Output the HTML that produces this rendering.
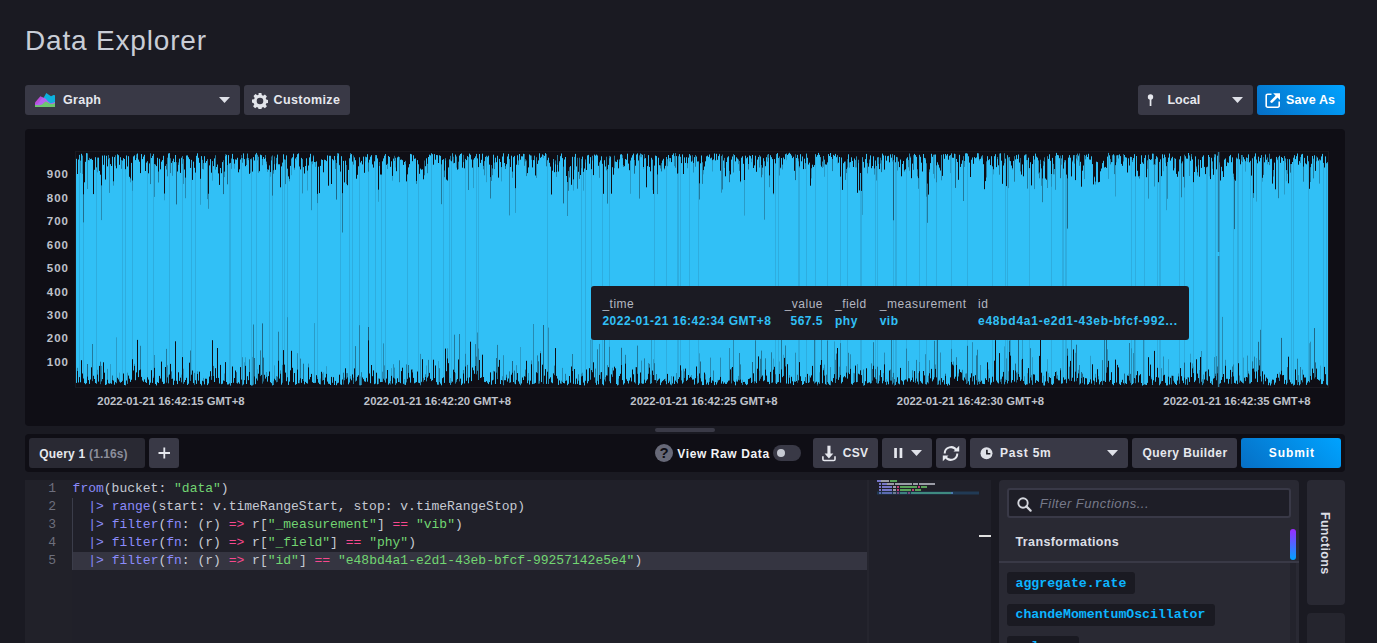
<!DOCTYPE html>
<html><head><meta charset="utf-8">
<style>
*{box-sizing:border-box;margin:0;padding:0}
html,body{width:1377px;height:643px;overflow:hidden;background:#1a1a22;font-family:"Liberation Sans",sans-serif;color:#c6cad3;position:relative}
.abs{position:absolute}
.t{position:absolute;line-height:1;white-space:nowrap}
.bx{position:absolute;background:#393946;border-radius:3px}
.ln{position:absolute;left:25px;width:31px;text-align:right;font-family:"Liberation Mono",monospace;font-size:13px;color:#6d6f7d;line-height:18px}
.code{position:absolute;left:72.6px;font-family:"Liberation Mono",monospace;font-size:13px;color:#c6cad3;line-height:18px;white-space:pre}
.kw{color:#8b8bfa}.str{color:#72d572}.op{color:#f7488d}.pipe{color:#8b8bfa}
.fn{position:absolute;left:1007px;height:22px;background:#1a1a22;border-radius:3px}
.fnt{position:absolute;left:1015.5px;font-family:"Liberation Mono",monospace;font-weight:bold;font-size:13.2px;color:#0cb4ff;line-height:1;white-space:nowrap}
</style></head><body>

<!-- header buttons -->
<div class="bx" style="left:25px;top:85px;width:215px;height:30px"></div>
<svg class="abs" style="left:35px;top:93px" width="20" height="14" viewBox="0 0 20 14">
  <path d="M8.5 14V5L11.3 0L13 1.3L16 3.2L18.5 2L20 2.3V14Z" fill="#0db1de"/>
  <path d="M0 14V9.5L5.4 3.3L9 5V14Z" fill="#b94fda"/>
  <path d="M0 14V11.8L3 10.5L7.5 4.6L10.5 5.6L13.2 8.5L15.5 10.3L17.8 9.7L20 9V14Z" fill="#b264ef"/>
  <path d="M0 14V12L4.5 12.3L7 11.5L10.5 8.5L12.5 9.3L15 10.8L17.5 10.9L20 10V14Z" fill="#6cc76d"/>
</svg>
<svg class="abs" style="left:219px;top:97px" width="11" height="6" viewBox="0 0 11 6"><path d="M0 0H11L5.5 6Z" fill="#dfe1e8"/></svg>

<div class="bx" style="left:244px;top:85px;width:106px;height:30px"></div>
<svg class="abs" style="left:252px;top:92.8px" width="16" height="16" viewBox="0 0 16 16">
  <path fill="#e2e4ea" fill-rule="evenodd" d="M6.6 0h2.8l.4 2.1 1.3.6 1.8-1.2 2 2-1.2 1.8.6 1.3 2.1.4v2.8l-2.1.4-.6 1.3 1.2 1.8-2 2-1.8-1.2-1.3.6-.4 2.1H6.6l-.4-2.1-1.3-.6-1.8 1.2-2-2 1.2-1.8-.6-1.3L0 9.4V6.6l2.1-.4.6-1.3-1.2-1.8 2-2 1.8 1.2 1.3-.6z M8 4.7a3.3 3.3 0 1 0 0 6.6a3.3 3.3 0 1 0 0-6.6z"/>
</svg>

<div class="bx" style="left:1138px;top:85px;width:115px;height:30px"></div>
<svg class="abs" style="left:1147px;top:94px" width="7" height="13" viewBox="0 0 7 13"><circle cx="3.5" cy="3" r="2.7" fill="#e6e8ee"/><rect x="2.7" y="4" width="1.7" height="8" fill="#e6e8ee"/></svg>
<svg class="abs" style="left:1232px;top:97px" width="11" height="6" viewBox="0 0 11 6"><path d="M0 0H11L5.5 6Z" fill="#dfe1e8"/></svg>

<div class="bx" style="left:1257px;top:85px;width:88px;height:30px;background:linear-gradient(45deg,#066fc5,#00a3ff)"></div>
<svg class="abs" style="left:1265px;top:93px" width="16" height="16" viewBox="0 0 16 16"><path d="M6.5 1.2H2.7A1.5 1.5 0 0 0 1.2 2.7v10A1.5 1.5 0 0 0 2.7 14.2h10A1.5 1.5 0 0 0 14.2 12.7V8.5" stroke="#fff" stroke-width="1.6" fill="none"/><path d="M8.2 0.3H15V7.1Z" fill="#fff"/><path d="M6.6 8.6L12.2 3" stroke="#fff" stroke-width="2.6" stroke-linecap="round"/></svg>
<div class="t" style="left:25.00px;top:26.90px;font-size:28px;color:#c9cdd6;letter-spacing:0.819px;">Data Explorer</div>
<div class="t" style="left:63.10px;top:94.22px;font-size:12.5px;color:#e6e8ee;letter-spacing:0.248px;font-weight:bold;">Graph</div>
<div class="t" style="left:273.60px;top:94.22px;font-size:12.5px;color:#e6e8ee;letter-spacing:0.388px;font-weight:bold;">Customize</div>
<div class="t" style="left:1167.40px;top:94.22px;font-size:12.5px;color:#e6e8ee;letter-spacing:0.039px;font-weight:bold;">Local</div>
<div class="t" style="left:1286.00px;top:94.22px;font-size:12.5px;color:#fff;letter-spacing:0.137px;font-weight:bold;">Save As</div>

<!-- graph panel -->
<div class="abs" style="left:25px;top:129px;width:1320px;height:297px;background:#0f0e15;border-radius:4px"></div>
<svg width="1377" height="643" style="position:absolute;left:0;top:0">
<rect x="75.5" y="151.5" width="1253" height="236" fill="none" stroke="#1a1920" stroke-width="1"/>
<path d="M76.5 158.8V382.9M77.5 174.0V370.9M78.5 159.5V382.5M79.5 154.9V377.1M80.5 160.7V382.3M81.5 153.8V360.2M82.5 155.6V373.5M83.5 194.5V378.5M84.5 182.3V383.1M85.5 161.8V384.2M86.5 153.1V383.2M87.5 153.4V376.4M88.5 160.1V380.1M89.5 157.9V383.9M90.5 159.0V379.5M91.5 158.7V367.3M92.5 160.0V381.1M93.5 194.1V375.8M94.5 169.8V379.0M95.5 157.2V383.0M96.5 167.4V383.7M97.5 157.7V374.5M98.5 157.6V381.6M99.5 170.9V365.9M100.5 174.7V384.1M101.5 185.5V381.3M102.5 155.6V379.1M103.5 164.8V362.3M104.5 155.4V372.7M105.5 179.5V385.0M106.5 155.8V384.4M107.5 166.4V379.7M108.5 155.1V383.3M109.5 158.0V383.7M110.5 164.1V383.2M111.5 166.0V383.8M112.5 156.7V379.8M113.5 181.4V380.6M114.5 157.1V384.7M115.5 155.4V382.2M116.5 168.3V383.2M117.5 154.3V377.8M118.5 155.2V379.4M119.5 164.8V381.6M120.5 157.2V382.7M121.5 160.2V382.0M122.5 160.6V380.8M123.5 158.1V373.5M124.5 159.0V385.0M125.5 169.2V385.3M126.5 155.5V380.5M127.5 166.5V383.8M128.5 156.2V375.6M129.5 176.8V378.7M130.5 178.5V381.9M131.5 162.9V379.8M132.5 180.6V359.2M133.5 156.4V370.5M134.5 155.4V365.8M135.5 160.1V380.2M136.5 154.5V372.4M137.5 153.5V339.9M138.5 159.6V377.1M139.5 161.7V370.2M140.5 173.1V369.4M141.5 154.1V376.9M142.5 159.1V380.5M143.5 156.6V381.8M144.5 154.8V379.4M145.5 171.0V382.1M146.5 162.6V383.0M147.5 161.2V377.3M148.5 173.3V379.6M149.5 163.4V384.9M150.5 153.5V382.7M151.5 158.0V370.2M152.5 155.9V382.9M153.5 153.9V377.8M154.5 164.0V367.8M155.5 164.6V384.0M156.5 166.1V385.4M157.5 157.8V382.2M158.5 171.7V383.0M159.5 158.8V375.9M160.5 169.3V378.5M161.5 161.7V361.6M162.5 160.1V381.8M163.5 155.8V384.0M164.5 193.6V383.6M165.5 165.9V367.0M166.5 164.1V382.5M167.5 157.8V377.3M168.5 153.5V383.3M169.5 153.1V374.5M170.5 158.4V363.9M171.5 162.9V378.9M172.5 161.1V378.7M173.5 158.7V384.9M174.5 162.1V380.7M175.5 155.0V341.3M176.5 162.3V380.8M177.5 171.5V384.1M178.5 162.6V372.3M179.5 158.7V380.9M180.5 172.9V377.7M181.5 157.7V382.3M182.5 156.1V357.1M183.5 159.1V383.8M184.5 169.5V382.1M185.5 177.7V380.0M186.5 155.5V377.8M187.5 155.4V385.0M188.5 157.3V383.7M189.5 159.1V362.7M190.5 167.9V380.9M191.5 159.9V374.7M192.5 179.9V370.5M193.5 161.6V383.1M194.5 167.8V384.7M195.5 172.6V380.2M196.5 155.8V383.9M197.5 153.3V373.9M198.5 157.8V380.6M199.5 162.8V371.7M200.5 178.8V383.9M201.5 156.1V385.4M202.5 159.9V380.8M203.5 163.2V381.3M204.5 156.2V384.4M205.5 162.8V378.7M206.5 161.0V378.8M207.5 159.2V385.1M208.5 193.8V383.5M209.5 165.4V376.6M210.5 159.1V371.2M211.5 172.7V379.8M212.5 161.1V340.2M213.5 166.1V375.9M214.5 158.4V382.0M215.5 155.4V368.2M216.5 167.0V378.1M217.5 164.5V348.0M218.5 173.4V377.9M219.5 184.9V383.5M220.5 168.0V364.9M221.5 173.2V384.2M222.5 162.1V383.7M223.5 160.5V380.5M224.5 171.7V381.0M225.5 154.2V362.1M226.5 154.8V382.0M227.5 165.2V384.5M228.5 155.1V384.4M229.5 163.5V383.5M230.5 162.9V385.6M231.5 158.6V383.0M232.5 153.9V366.5M233.5 159.2V382.9M234.5 163.7V378.0M235.5 159.4V370.5M236.5 159.7V382.8M237.5 157.8V383.5M238.5 172.3V382.3M239.5 169.3V383.7M240.5 159.5V367.1M241.5 155.0V379.6M242.5 158.3V385.3M243.5 153.4V384.4M244.5 159.1V380.1M245.5 166.2V365.8M246.5 158.7V384.0M247.5 153.6V376.2M248.5 158.0V380.2M249.5 173.8V372.0M250.5 159.1V384.9M251.5 158.4V385.6M252.5 171.6V385.4M253.5 157.1V384.5M254.5 160.5V376.3M255.5 154.1V384.2M256.5 152.9V378.5M257.5 154.8V380.5M258.5 156.8V373.7M259.5 171.2V364.9M260.5 154.7V376.1M261.5 155.2V374.9M262.5 159.0V383.4M263.5 157.0V381.3M264.5 158.9V374.8M265.5 155.1V378.6M266.5 161.7V376.8M267.5 169.3V381.6M268.5 169.7V376.1M269.5 165.4V371.5M270.5 172.1V382.2M271.5 156.7V383.2M272.5 155.6V385.4M273.5 170.4V385.0M274.5 156.6V378.7M275.5 169.8V380.3M276.5 157.9V382.2M277.5 154.5V381.8M278.5 164.3V360.6M279.5 164.3V378.6M280.5 187.3V373.6M281.5 166.4V384.7M282.5 162.6V382.6M283.5 154.3V350.1M284.5 159.4V364.6M285.5 159.8V372.6M286.5 155.4V381.2M287.5 168.7V377.2M288.5 176.4V384.9M289.5 178.9V381.6M290.5 165.9V370.3M291.5 158.5V350.8M292.5 157.3V367.8M293.5 153.7V382.1M294.5 167.8V373.0M295.5 158.5V384.8M296.5 157.1V384.1M297.5 154.2V369.5M298.5 153.4V383.2M299.5 166.5V383.2M300.5 169.4V378.2M301.5 157.9V382.8M302.5 159.2V379.0M303.5 167.1V380.9M304.5 173.5V384.3M305.5 166.0V381.9M306.5 158.3V383.1M307.5 170.6V383.6M308.5 165.5V367.3M309.5 157.4V379.4M310.5 153.8V377.0M311.5 161.7V373.9M312.5 161.3V382.2M313.5 155.6V383.0M314.5 162.0V383.1M315.5 162.1V382.8M316.5 161.4V375.2M317.5 193.9V379.0M318.5 166.7V382.7M319.5 193.1V384.1M320.5 165.9V384.4M321.5 159.4V371.8M322.5 160.0V380.5M323.5 172.3V380.0M324.5 159.7V384.6M325.5 160.1V377.5M326.5 161.1V373.8M327.5 155.4V381.6M328.5 185.7V383.7M329.5 155.8V383.9M330.5 155.8V385.0M331.5 184.0V376.9M332.5 159.1V382.8M333.5 160.3V377.2M334.5 156.0V385.0M335.5 159.9V380.9M336.5 163.1V385.2M337.5 153.2V383.3M338.5 153.5V382.7M339.5 164.9V374.7M340.5 171.6V384.4M341.5 156.2V384.9M342.5 193.3V379.5M343.5 160.9V384.3M344.5 182.4V380.2M345.5 160.7V368.3M346.5 165.0V378.8M347.5 185.2V377.3M348.5 169.9V384.3M349.5 158.3V382.5M350.5 153.3V378.6M351.5 154.1V380.3M352.5 161.6V374.4M353.5 155.7V384.0M354.5 157.4V368.4M355.5 160.2V381.5M356.5 178.7V380.7M357.5 174.8V376.8M358.5 166.3V375.3M359.5 157.3V385.2M360.5 162.5V385.3M361.5 160.9V384.9M362.5 164.4V377.5M363.5 156.6V379.2M364.5 172.8V381.3M365.5 156.7V381.8M366.5 157.2V377.9M367.5 154.2V381.7M368.5 162.7V340.2M369.5 159.7V373.5M370.5 156.7V383.2M371.5 155.2V365.0M372.5 164.4V376.2M373.5 167.6V370.4M374.5 161.3V384.2M375.5 155.0V383.6M376.5 155.2V372.7M377.5 158.4V384.3M378.5 189.7V383.9M379.5 162.1V378.7M380.5 174.5V382.1M381.5 174.6V382.0M382.5 161.3V382.0M383.5 158.4V378.6M384.5 155.7V380.3M385.5 154.0V382.5M386.5 164.8V378.6M387.5 163.8V370.0M388.5 156.0V384.6M389.5 157.0V383.3M390.5 166.8V384.3M391.5 161.3V375.8M392.5 175.9V383.6M393.5 158.6V377.5M394.5 155.9V378.4M395.5 157.8V384.8M396.5 171.2V383.3M397.5 157.4V378.3M398.5 156.6V382.0M399.5 157.0V382.1M400.5 159.8V383.2M401.5 159.5V371.1M402.5 160.2V367.7M403.5 164.9V383.8M404.5 162.0V384.5M405.5 160.9V384.9M406.5 181.4V382.3M407.5 174.4V378.8M408.5 167.4V372.7M409.5 164.1V377.5M410.5 153.9V382.7M411.5 154.3V369.6M412.5 161.2V372.3M413.5 155.3V377.9M414.5 158.8V383.3M415.5 158.4V382.7M416.5 181.0V382.1M417.5 160.1V371.5M418.5 164.3V382.7M419.5 173.8V383.1M420.5 168.6V385.2M421.5 169.7V382.1M422.5 169.3V359.2M423.5 179.3V381.6M424.5 160.7V380.0M425.5 166.2V377.0M426.5 158.3V381.3M427.5 163.9V377.6M428.5 157.0V376.2M429.5 154.7V372.9M430.5 155.4V378.8M431.5 153.2V381.1M432.5 154.2V380.1M433.5 164.7V359.7M434.5 154.1V378.1M435.5 159.7V365.5M436.5 155.0V382.1M437.5 155.2V384.6M438.5 163.0V384.7M439.5 155.3V382.0M440.5 155.9V383.6M441.5 164.5V385.3M442.5 159.9V378.2M443.5 159.1V377.3M444.5 170.7V382.9M445.5 158.3V348.6M446.5 179.6V371.2M447.5 180.5V358.4M448.5 167.4V363.2M449.5 159.4V382.9M450.5 155.9V384.9M451.5 161.3V382.7M452.5 153.3V381.7M453.5 156.8V369.7M454.5 162.9V372.0M455.5 154.6V383.5M456.5 156.6V382.1M457.5 169.6V379.1M458.5 161.8V359.5M459.5 155.5V381.3M460.5 154.0V378.6M461.5 153.4V385.1M462.5 167.7V383.6M463.5 154.9V373.4M464.5 168.3V383.5M465.5 158.9V366.4M466.5 160.1V380.8M467.5 156.1V377.6M468.5 157.1V383.3M469.5 153.6V377.4M470.5 154.8V341.7M471.5 159.4V381.1M472.5 167.6V367.5M473.5 159.6V370.3M474.5 158.1V373.8M475.5 156.4V366.0M476.5 153.9V374.2M477.5 158.4V370.7M478.5 167.1V380.0M479.5 154.0V360.0M480.5 162.9V378.0M481.5 159.8V377.4M482.5 153.7V354.7M483.5 165.9V377.0M484.5 161.2V381.9M485.5 156.9V382.1M486.5 155.8V381.1M487.5 156.8V382.7M488.5 155.7V384.1M489.5 164.6V382.1M490.5 177.2V372.4M491.5 165.1V384.7M492.5 168.6V380.4M493.5 154.7V379.6M494.5 162.8V371.5M495.5 157.7V384.0M496.5 162.2V372.4M497.5 155.8V379.1M498.5 177.6V366.8M499.5 158.9V359.9M500.5 162.0V384.0M501.5 167.1V380.0M502.5 156.5V380.4M503.5 153.3V385.2M504.5 163.0V380.2M505.5 166.3V380.2M506.5 164.2V377.4M507.5 156.5V381.6M508.5 153.9V378.5M509.5 159.1V382.9M510.5 167.0V382.4M511.5 155.7V374.7M512.5 171.7V372.5M513.5 157.1V382.0M514.5 155.9V383.3M515.5 188.2V384.2M516.5 164.7V379.8M517.5 155.3V373.1M518.5 160.6V381.4M519.5 154.0V383.9M520.5 159.7V385.2M521.5 156.3V383.5M522.5 156.4V377.5M523.5 153.8V380.0M524.5 154.1V376.3M525.5 159.3V376.5M526.5 160.6V360.8M527.5 173.1V383.2M528.5 167.4V380.4M529.5 154.5V384.5M530.5 155.4V380.7M531.5 155.7V364.2M532.5 167.4V384.1M533.5 160.1V384.0M534.5 155.7V383.6M535.5 175.5V382.9M536.5 157.3V372.3M537.5 163.9V373.1M538.5 160.4V383.5M539.5 153.3V383.4M540.5 157.8V353.2M541.5 156.8V382.1M542.5 154.4V364.7M543.5 155.2V383.8M544.5 155.9V375.7M545.5 153.1V369.1M546.5 154.2V383.9M547.5 160.2V371.7M548.5 157.7V384.0M549.5 162.8V378.8M550.5 166.6V377.3M551.5 194.5V382.4M552.5 170.7V383.2M553.5 159.0V373.4M554.5 172.2V375.1M555.5 160.6V348.1M556.5 171.9V375.9M557.5 155.0V378.6M558.5 171.6V384.9M559.5 161.1V380.4M560.5 155.9V383.5M561.5 153.5V383.8M562.5 158.1V381.9M563.5 166.8V383.0M564.5 159.5V383.4M565.5 157.0V381.0M566.5 176.0V380.5M567.5 182.1V385.2M568.5 171.1V383.8M569.5 167.3V376.0M570.5 166.1V382.7M571.5 184.8V366.5M572.5 156.8V370.9M573.5 179.4V383.8M574.5 156.9V369.0M575.5 153.9V384.2M576.5 166.4V378.6M577.5 157.9V383.9M578.5 171.8V380.5M579.5 157.8V384.9M580.5 175.0V385.0M581.5 159.1V376.4M582.5 156.6V375.8M583.5 171.9V382.6M584.5 168.5V385.4M585.5 159.5V380.8M586.5 170.0V369.5M587.5 155.4V383.3M588.5 154.9V381.2M589.5 163.7V368.2M590.5 157.1V379.7M591.5 169.2V370.1M592.5 155.8V372.2M593.5 175.1V362.3M594.5 154.6V377.4M595.5 155.6V382.7M596.5 154.6V384.9M597.5 155.5V380.7M598.5 165.8V384.3M599.5 162.4V374.9M600.5 160.4V378.9M601.5 156.3V372.1M602.5 163.8V384.2M603.5 193.8V385.3M604.5 160.2V379.4M605.5 166.5V381.3M606.5 156.8V375.4M607.5 169.2V375.4M608.5 164.9V367.2M609.5 155.9V381.2M610.5 156.6V383.2M611.5 193.7V374.4M612.5 167.2V376.8M613.5 174.7V370.5M614.5 155.8V366.7M615.5 161.5V368.3M616.5 162.0V384.0M617.5 159.7V385.4M618.5 168.3V384.8M619.5 159.4V376.0M620.5 154.5V373.8M621.5 154.2V365.0M622.5 155.4V380.1M623.5 165.3V384.6M624.5 166.2V383.3M625.5 159.0V363.5M626.5 159.8V379.3M627.5 153.7V381.1M628.5 163.6V383.5M629.5 170.2V380.5M630.5 160.6V377.6M631.5 157.6V381.5M632.5 155.3V369.5M633.5 153.6V374.3M634.5 160.1V382.3M635.5 165.7V383.4M636.5 154.5V367.2M637.5 153.4V373.7M638.5 160.5V385.0M639.5 155.5V383.5M640.5 153.5V372.5M641.5 154.1V383.2M642.5 154.8V383.8M643.5 167.0V383.7M644.5 154.0V379.5M645.5 158.1V382.9M646.5 187.3V380.6M647.5 166.1V379.3M648.5 155.1V373.7M649.5 166.9V367.5M650.5 171.3V383.9M651.5 157.8V383.2M652.5 159.7V370.6M653.5 193.9V375.0M654.5 165.6V380.0M655.5 155.6V380.1M656.5 156.1V383.1M657.5 174.6V380.8M658.5 157.7V379.6M659.5 165.2V378.6M660.5 165.6V385.1M661.5 163.2V382.5M662.5 160.5V381.1M663.5 158.8V380.2M664.5 168.5V379.2M665.5 165.8V381.1M666.5 157.0V384.2M667.5 159.3V373.9M668.5 155.0V383.1M669.5 158.0V381.7M670.5 158.1V384.5M671.5 162.1V385.2M672.5 154.9V383.5M673.5 153.4V376.5M674.5 156.2V384.0M675.5 153.0V380.6M676.5 156.1V381.9M677.5 173.6V383.4M678.5 156.3V379.0M679.5 154.2V377.2M680.5 156.8V365.3M681.5 163.1V380.3M682.5 154.4V383.6M683.5 174.0V382.3M684.5 157.4V377.8M685.5 162.9V368.6M686.5 157.2V380.9M687.5 163.3V379.8M688.5 157.6V375.0M689.5 154.1V377.9M690.5 155.5V376.8M691.5 161.6V377.7M692.5 155.4V379.6M693.5 162.9V379.5M694.5 157.1V384.6M695.5 155.0V378.2M696.5 156.5V366.5M697.5 161.5V383.6M698.5 161.4V382.7M699.5 183.5V373.4M700.5 163.3V378.2M701.5 155.5V381.5M702.5 162.4V385.1M703.5 170.1V385.0M704.5 166.5V372.6M705.5 161.3V379.5M706.5 156.3V384.4M707.5 155.6V382.6M708.5 156.9V384.8M709.5 154.5V381.8M710.5 158.4V377.0M711.5 157.6V382.9M712.5 160.2V380.5M713.5 159.4V381.2M714.5 153.5V385.1M715.5 160.4V382.1M716.5 153.8V384.5M717.5 159.8V382.4M718.5 156.1V380.4M719.5 153.9V379.8M720.5 170.7V376.9M721.5 156.1V383.6M722.5 154.7V381.4M723.5 160.5V383.8M724.5 157.9V382.5M725.5 176.3V383.9M726.5 162.0V383.9M727.5 157.4V382.3M728.5 156.3V380.7M729.5 170.9V380.4M730.5 174.4V369.4M731.5 159.6V383.3M732.5 156.5V367.0M733.5 154.1V380.7M734.5 155.1V381.9M735.5 161.4V385.3M736.5 157.3V381.4M737.5 158.6V381.6M738.5 159.6V379.7M739.5 161.1V380.3M740.5 181.2V379.4M741.5 157.7V382.9M742.5 156.3V384.8M743.5 163.8V382.0M744.5 180.0V381.9M745.5 155.7V383.8M746.5 158.3V385.1M747.5 157.2V384.3M748.5 164.0V379.1M749.5 155.5V378.7M750.5 156.1V377.8M751.5 158.6V383.0M752.5 155.0V381.7M753.5 168.0V373.3M754.5 165.4V383.3M755.5 155.7V381.4M756.5 171.8V383.1M757.5 159.5V368.7M758.5 157.0V356.4M759.5 155.3V380.7M760.5 156.5V378.6M761.5 165.0V376.6M762.5 167.7V375.5M763.5 158.2V381.2M764.5 161.4V380.3M765.5 166.2V369.5M766.5 157.2V375.6M767.5 154.8V381.8M768.5 154.0V381.9M769.5 175.5V384.1M770.5 155.2V371.9M771.5 157.2V382.8M772.5 159.1V382.5M773.5 193.4V369.6M774.5 159.1V366.8M775.5 163.4V383.1M776.5 154.1V384.0M777.5 153.1V382.5M778.5 158.0V382.0M779.5 156.6V373.9M780.5 167.7V382.7M781.5 158.0V369.3M782.5 164.7V377.2M783.5 157.5V375.9M784.5 159.2V357.9M785.5 154.2V366.3M786.5 153.6V383.5M787.5 155.0V364.2M788.5 153.7V383.8M789.5 152.8V377.6M790.5 153.9V383.4M791.5 155.5V376.8M792.5 158.1V381.3M793.5 156.8V385.0M794.5 170.8V381.6M795.5 154.5V382.0M796.5 158.0V381.0M797.5 154.9V382.5M798.5 158.7V380.3M799.5 166.1V362.1M800.5 154.2V376.3M801.5 161.3V381.0M802.5 156.5V384.9M803.5 169.1V384.0M804.5 158.7V381.2M805.5 163.2V382.4M806.5 153.6V383.0M807.5 157.8V373.9M808.5 164.5V382.9M809.5 162.7V382.2M810.5 185.7V377.5M811.5 168.3V375.4M812.5 164.7V365.9M813.5 166.9V381.4M814.5 165.1V383.4M815.5 154.2V382.5M816.5 156.8V381.7M817.5 155.1V385.3M818.5 152.9V382.3M819.5 154.8V383.7M820.5 157.1V364.9M821.5 166.6V360.0M822.5 161.6V383.2M823.5 156.0V370.2M824.5 159.7V375.5M825.5 164.4V384.2M826.5 164.6V385.0M827.5 162.4V382.0M828.5 154.1V383.7M829.5 156.0V384.9M830.5 153.0V385.2M831.5 157.0V380.9M832.5 159.1V382.2M833.5 154.9V378.1M834.5 155.8V374.1M835.5 153.9V383.0M836.5 157.2V378.7M837.5 155.3V348.0M838.5 162.7V379.9M839.5 157.0V377.3M840.5 176.6V374.9M841.5 157.5V383.4M842.5 189.9V381.9M843.5 163.2V377.3M844.5 161.7V376.2M845.5 161.6V377.4M846.5 169.0V372.5M847.5 159.1V378.6M848.5 154.3V372.5M849.5 162.5V374.1M850.5 162.1V368.8M851.5 157.3V383.8M852.5 160.9V384.7M853.5 167.0V383.0M854.5 158.5V382.1M855.5 160.2V365.6M856.5 156.5V382.2M857.5 192.8V382.0M858.5 159.8V373.7M859.5 190.4V374.4M860.5 173.0V370.3M861.5 190.9V375.1M862.5 157.2V383.1M863.5 161.9V385.6M864.5 167.6V385.2M865.5 159.1V381.2M866.5 153.9V368.3M867.5 163.3V383.2M868.5 166.7V382.7M869.5 159.6V382.3M870.5 155.4V383.5M871.5 168.2V383.1M872.5 166.0V380.4M873.5 156.3V365.6M874.5 168.6V377.4M875.5 160.5V378.9M876.5 166.0V382.7M877.5 157.4V383.6M878.5 157.1V383.4M879.5 169.1V380.8M880.5 157.8V370.1M881.5 160.5V377.1M882.5 153.6V383.3M883.5 155.4V380.7M884.5 169.6V364.3M885.5 155.7V381.9M886.5 160.7V384.8M887.5 156.2V381.6M888.5 155.8V384.3M889.5 162.3V370.5M890.5 154.4V380.4M891.5 157.7V380.5M892.5 154.2V384.3M893.5 160.3V382.6M894.5 155.2V385.4M895.5 162.3V384.9M896.5 156.9V381.8M897.5 157.4V377.3M898.5 161.6V383.5M899.5 167.1V384.3M900.5 159.5V367.9M901.5 176.3V380.3M902.5 164.0V381.3M903.5 161.0V384.7M904.5 170.4V380.3M905.5 169.3V379.5M906.5 158.5V379.5M907.5 157.2V381.5M908.5 160.2V378.2M909.5 153.6V378.4M910.5 156.6V381.6M911.5 178.2V380.1M912.5 163.6V377.4M913.5 155.4V381.9M914.5 153.9V371.1M915.5 155.1V382.9M916.5 156.9V378.4M917.5 169.4V381.6M918.5 178.2V384.3M919.5 154.8V371.2M920.5 156.8V381.2M921.5 162.7V382.7M922.5 171.5V383.7M923.5 154.0V371.0M924.5 157.9V375.4M925.5 158.3V384.1M926.5 163.4V384.5M927.5 183.7V382.3M928.5 194.6V383.3M929.5 169.5V373.2M930.5 163.1V378.3M931.5 153.8V368.9M932.5 156.8V381.3M933.5 154.8V379.5M934.5 154.6V377.2M935.5 154.5V368.8M936.5 165.5V377.4M937.5 162.3V384.7M938.5 164.7V384.4M939.5 167.6V380.5M940.5 170.5V384.7M941.5 154.9V378.1M942.5 175.9V382.2M943.5 154.3V380.2M944.5 158.8V384.5M945.5 154.0V375.7M946.5 155.5V384.0M947.5 154.1V385.6M948.5 159.7V383.7M949.5 155.8V385.1M950.5 155.0V377.4M951.5 153.4V361.9M952.5 157.7V364.5M953.5 157.8V365.4M954.5 153.7V378.7M955.5 154.2V376.7M956.5 159.0V364.9M957.5 162.0V381.0M958.5 179.8V376.4M959.5 154.8V369.4M960.5 166.9V372.0M961.5 163.8V372.6M962.5 160.3V379.7M963.5 156.3V380.7M964.5 161.0V377.5M965.5 153.4V379.4M966.5 153.2V384.0M967.5 153.7V383.1M968.5 156.3V381.3M969.5 162.6V384.8M970.5 177.0V377.6M971.5 159.7V373.3M972.5 157.5V381.3M973.5 163.8V376.2M974.5 157.1V384.6M975.5 158.2V375.2M976.5 157.4V380.2M977.5 153.2V384.9M978.5 153.4V381.7M979.5 159.3V384.0M980.5 158.8V381.9M981.5 156.0V380.7M982.5 155.3V383.7M983.5 164.2V384.0M984.5 189.2V384.1M985.5 181.1V378.3M986.5 161.5V380.0M987.5 156.2V362.3M988.5 160.2V381.7M989.5 159.2V378.2M990.5 165.1V384.7M991.5 156.2V382.6M992.5 166.4V376.7M993.5 169.3V381.8M994.5 156.2V360.7M995.5 154.2V340.2M996.5 167.1V380.6M997.5 157.1V382.4M998.5 165.3V383.4M999.5 153.7V353.1M1000.5 153.3V381.7M1001.5 160.7V383.8M1002.5 183.8V376.6M1003.5 165.5V371.9M1004.5 153.4V384.3M1005.5 158.7V381.7M1006.5 186.1V380.0M1007.5 155.2V383.4M1008.5 157.5V380.9M1009.5 157.0V352.0M1010.5 161.1V355.6M1011.5 165.5V382.6M1012.5 168.1V380.1M1013.5 160.9V370.2M1014.5 156.3V381.6M1015.5 159.4V370.4M1016.5 155.1V382.3M1017.5 158.9V379.8M1018.5 154.5V374.0M1019.5 162.5V376.9M1020.5 158.1V380.9M1021.5 174.6V379.4M1022.5 164.4V358.9M1023.5 176.3V381.0M1024.5 155.4V383.7M1025.5 154.5V385.1M1026.5 154.5V384.4M1027.5 160.1V384.3M1028.5 157.7V368.1M1029.5 168.1V383.3M1030.5 162.2V377.3M1031.5 185.4V380.3M1032.5 164.1V384.8M1033.5 155.9V374.3M1034.5 159.6V374.6M1035.5 153.6V382.9M1036.5 156.6V380.3M1037.5 157.7V381.0M1038.5 160.5V381.9M1039.5 172.6V355.9M1040.5 159.8V338.7M1041.5 168.5V372.7M1042.5 178.6V382.8M1043.5 160.9V385.3M1044.5 157.5V385.5M1045.5 178.5V381.5M1046.5 179.7V371.5M1047.5 156.3V381.2M1048.5 158.9V382.8M1049.5 154.3V377.1M1050.5 160.8V378.0M1051.5 174.0V384.3M1052.5 157.9V385.0M1053.5 163.9V383.7M1054.5 169.0V376.1M1055.5 155.9V372.0M1056.5 152.9V378.4M1057.5 155.0V378.8M1058.5 155.3V380.3M1059.5 158.2V380.4M1060.5 155.8V370.2M1061.5 158.5V383.7M1062.5 155.1V383.3M1063.5 168.6V377.4M1064.5 160.1V379.8M1065.5 160.2V379.3M1066.5 174.6V383.2M1067.5 178.6V355.5M1068.5 157.6V378.8M1069.5 155.1V380.4M1070.5 157.7V360.9M1071.5 176.4V381.0M1072.5 160.7V377.7M1073.5 155.1V349.4M1074.5 155.1V381.6M1075.5 180.1V371.6M1076.5 155.0V381.1M1077.5 153.7V378.0M1078.5 155.6V373.3M1079.5 153.6V384.5M1080.5 161.8V383.5M1081.5 186.7V378.0M1082.5 170.7V382.9M1083.5 165.5V377.2M1084.5 155.0V384.4M1085.5 156.2V378.1M1086.5 154.7V378.4M1087.5 157.0V384.7M1088.5 153.8V384.0M1089.5 159.5V382.3M1090.5 159.7V379.3M1091.5 156.3V383.6M1092.5 164.1V364.3M1093.5 184.4V380.5M1094.5 176.7V385.0M1095.5 181.7V377.6M1096.5 161.7V382.2M1097.5 162.1V369.2M1098.5 182.3V379.3M1099.5 181.9V384.4M1100.5 171.3V382.2M1101.5 168.5V381.1M1102.5 163.1V385.0M1103.5 160.8V380.8M1104.5 167.5V380.8M1105.5 166.9V382.0M1106.5 167.9V372.5M1107.5 156.6V367.2M1108.5 152.9V360.8M1109.5 155.3V381.7M1110.5 159.2V380.0M1111.5 162.1V372.2M1112.5 155.3V384.2M1113.5 154.3V385.2M1114.5 155.6V383.0M1115.5 165.2V359.6M1116.5 155.5V382.5M1117.5 155.2V364.9M1118.5 155.1V367.4M1119.5 154.4V384.1M1120.5 156.1V385.0M1121.5 163.9V382.2M1122.5 165.8V379.8M1123.5 154.0V383.2M1124.5 155.0V384.3M1125.5 157.2V383.2M1126.5 157.6V384.0M1127.5 172.5V375.5M1128.5 158.3V375.9M1129.5 165.5V380.4M1130.5 156.8V382.7M1131.5 157.0V385.1M1132.5 160.3V384.1M1133.5 158.1V383.1M1134.5 154.2V378.0M1135.5 176.4V383.2M1136.5 156.0V375.2M1137.5 170.8V371.1M1138.5 176.4V382.4M1139.5 175.9V375.4M1140.5 164.0V374.2M1141.5 155.3V383.0M1142.5 162.4V385.6M1143.5 163.8V385.0M1144.5 158.0V384.4M1145.5 155.2V384.7M1146.5 177.2V385.0M1147.5 160.4V382.9M1148.5 154.8V357.2M1149.5 159.0V375.9M1150.5 160.0V364.6M1151.5 159.0V379.2M1152.5 153.6V385.0M1153.5 153.8V380.3M1154.5 164.4V350.9M1155.5 159.0V382.0M1156.5 156.2V377.1M1157.5 157.1V367.8M1158.5 182.2V377.6M1159.5 161.9V385.2M1160.5 159.3V383.7M1161.5 176.1V381.3M1162.5 154.3V381.0M1163.5 158.2V375.3M1164.5 154.6V374.8M1165.5 157.2V382.9M1166.5 166.2V385.4M1167.5 162.0V385.3M1168.5 157.6V376.6M1169.5 153.5V384.5M1170.5 160.6V377.8M1171.5 158.3V384.3M1172.5 156.8V375.8M1173.5 170.4V380.7M1174.5 158.1V382.6M1175.5 158.8V384.0M1176.5 173.9V385.0M1177.5 176.8V381.0M1178.5 171.4V376.4M1179.5 159.4V383.6M1180.5 156.2V368.1M1181.5 163.5V376.2M1182.5 161.5V380.7M1183.5 176.8V383.1M1184.5 154.8V377.4M1185.5 156.3V384.6M1186.5 158.6V379.2M1187.5 158.7V384.9M1188.5 153.0V377.5M1189.5 155.5V381.9M1190.5 160.8V362.4M1191.5 154.0V377.0M1192.5 159.4V368.3M1193.5 182.2V373.1M1194.5 172.0V382.1M1195.5 156.4V380.5M1196.5 166.6V359.3M1197.5 172.4V373.6M1198.5 159.4V378.1M1199.5 176.7V383.3M1200.5 160.0V357.0M1201.5 167.9V381.7M1202.5 156.8V385.1M1203.5 155.4V383.3M1204.5 166.9V379.5M1205.5 174.1V371.7M1206.5 167.3V379.7M1207.5 166.7V380.8M1208.5 155.0V369.5M1209.5 157.0V376.3M1210.5 179.1V383.0M1211.5 157.8V383.8M1212.5 161.5V384.8M1213.5 174.8V378.6M1214.5 154.3V377.8M1215.5 154.4V375.8M1216.5 169.3V380.2M1217.5 155.7V373.2M1218.5 164.5V374.3M1219.5 162.5V383.8M1220.5 180.5V383.2M1221.5 166.8V379.9M1222.5 171.2V376.9M1223.5 177.0V374.0M1224.5 159.6V382.4M1225.5 158.5V365.7M1226.5 166.1V378.8M1227.5 162.3V378.8M1228.5 162.8V383.7M1229.5 156.2V379.1M1230.5 154.9V369.9M1231.5 162.2V383.6M1232.5 157.4V372.1M1233.5 173.7V376.3M1234.5 179.7V382.9M1235.5 180.7V383.5M1236.5 157.6V380.7M1237.5 158.7V384.1M1238.5 153.5V363.2M1239.5 159.3V382.5M1240.5 164.0V380.7M1241.5 155.0V381.8M1242.5 155.1V382.8M1243.5 157.1V383.4M1244.5 159.3V377.7M1245.5 161.3V381.1M1246.5 157.5V377.0M1247.5 158.0V377.4M1248.5 154.4V373.5M1249.5 162.3V383.5M1250.5 160.8V383.3M1251.5 175.6V382.0M1252.5 158.3V368.6M1253.5 193.2V368.5M1254.5 156.5V371.5M1255.5 153.4V378.6M1256.5 159.6V371.4M1257.5 163.3V382.1M1258.5 156.7V369.7M1259.5 161.4V365.4M1260.5 158.0V376.2M1261.5 155.1V381.6M1262.5 177.8V371.3M1263.5 157.4V384.2M1264.5 162.3V374.5M1265.5 154.5V381.2M1266.5 159.7V377.6M1267.5 157.6V378.8M1268.5 162.0V385.2M1269.5 153.8V382.7M1270.5 159.1V385.5M1271.5 158.7V383.5M1272.5 183.6V379.6M1273.5 170.0V379.8M1274.5 162.6V384.7M1275.5 189.3V382.6M1276.5 156.9V377.8M1277.5 158.6V373.9M1278.5 157.1V377.7M1279.5 155.7V380.9M1280.5 162.8V374.4M1281.5 157.0V370.5M1282.5 158.0V375.3M1283.5 160.9V375.0M1284.5 156.1V383.9M1285.5 158.5V379.9M1286.5 170.1V384.5M1287.5 159.0V382.8M1288.5 183.3V356.7M1289.5 159.0V379.7M1290.5 164.3V382.3M1291.5 164.0V384.1M1292.5 162.0V383.6M1293.5 157.7V385.5M1294.5 155.2V384.8M1295.5 159.1V369.4M1296.5 156.2V380.1M1297.5 153.5V385.0M1298.5 164.7V382.1M1299.5 161.1V385.3M1300.5 157.1V384.1M1301.5 154.5V380.3M1302.5 153.9V382.3M1303.5 166.7V374.7M1304.5 157.9V377.5M1305.5 163.4V377.5M1306.5 164.3V384.8M1307.5 155.8V382.6M1308.5 161.3V381.1M1309.5 188.8V382.3M1310.5 167.3V375.9M1311.5 163.8V379.8M1312.5 156.0V368.6M1313.5 158.8V373.1M1314.5 155.3V378.3M1315.5 170.9V377.1M1316.5 156.5V368.6M1317.5 157.5V379.1M1318.5 160.6V379.9M1319.5 159.4V380.6M1320.5 159.9V379.3M1321.5 156.4V384.1M1322.5 153.9V383.9M1323.5 162.9V381.1M1324.5 167.5V366.9M1325.5 156.4V374.2M1326.5 163.2V384.5M1327.5 162.2V385.3" stroke="#31c0f6" stroke-width="1" fill="none"/>
<path d="M77.5 367.8V370.9M83.5 194.5V222.4M92.5 344.0V381.1M108.5 155.1V159.2M115.5 155.4V165.7M121.5 160.2V168.8M136.5 154.5V158.1M140.5 345.8V369.4M150.5 153.5V184.1M158.5 171.7V182.5M166.5 348.9V382.5M167.5 157.8V176.3M170.5 158.4V173.1M190.5 350.5V380.9M194.5 372.9V384.7M202.5 159.9V168.9M203.5 163.2V169.4M215.5 155.4V169.6M248.5 158.0V160.2M249.5 359.3V372.0M253.5 324.5V384.5M255.5 154.1V155.0M260.5 350.4V376.1M262.5 159.0V165.2M265.5 155.1V158.0M272.5 155.6V195.6M273.5 170.4V173.7M274.5 156.6V164.2M276.5 376.1V382.2M277.5 154.5V155.0M278.5 331.7V360.6M280.5 370.4V373.6M282.5 364.9V382.6M285.5 159.8V184.1M294.5 167.8V169.7M299.5 380.1V383.2M300.5 358.6V378.2M309.5 379.3V379.4M322.5 373.5V380.5M335.5 159.9V169.0M342.5 193.3V232.5M347.5 373.1V377.3M353.5 377.7V384.0M355.5 346.1V381.5M361.5 372.2V384.9M368.5 162.7V171.6M378.5 378.4V383.9M399.5 157.0V182.2M399.5 360.3V382.1M406.5 364.4V382.3M412.5 369.3V372.3M416.5 181.0V183.9M423.5 377.9V381.6M425.5 374.3V377.0M427.5 163.9V173.2M428.5 359.9V376.2M439.5 368.2V382.0M441.5 164.5V204.2M450.5 155.9V160.5M454.5 334.7V372.0M456.5 380.2V382.1M458.5 161.8V169.1M459.5 334.0V381.3M463.5 370.0V373.4M468.5 157.1V190.0M475.5 344.1V366.0M476.5 356.6V374.2M483.5 165.9V169.3M490.5 177.2V198.5M491.5 165.1V180.9M492.5 168.6V175.2M493.5 370.8V379.6M497.5 344.9V379.1M509.5 371.4V382.9M518.5 160.6V165.0M524.5 154.1V165.8M525.5 159.3V161.4M526.5 160.6V176.1M531.5 155.7V159.8M537.5 163.9V163.9M537.5 355.4V373.1M539.5 380.9V383.4M554.5 365.6V375.1M555.5 160.6V164.3M557.5 155.0V164.9M561.5 380.7V383.8M565.5 373.8V381.0M568.5 171.1V190.8M572.5 354.0V370.9M578.5 374.3V380.5M579.5 157.8V178.9M595.5 368.6V382.7M597.5 349.3V380.7M604.5 336.6V379.4M605.5 377.0V381.3M606.5 156.8V170.3M607.5 169.2V203.6M607.5 365.2V375.4M609.5 155.9V158.3M614.5 155.8V168.2M625.5 354.8V363.5M637.5 345.6V373.7M639.5 155.5V198.6M644.5 358.4V379.5M649.5 363.9V367.5M654.5 363.2V380.0M657.5 174.6V194.1M660.5 165.6V168.5M667.5 159.3V166.2M675.5 153.0V167.7M684.5 371.3V377.8M695.5 155.0V166.7M699.5 183.5V199.5M702.5 162.4V183.9M709.5 378.1V381.8M713.5 370.5V381.2M722.5 154.7V189.5M731.5 367.9V383.3M733.5 154.1V172.5M739.5 161.1V170.9M739.5 353.0V380.3M740.5 364.4V379.4M748.5 164.0V169.5M755.5 340.3V381.4M757.5 159.5V159.8M759.5 155.3V167.5M760.5 358.8V378.6M761.5 350.6V376.6M765.5 358.3V369.5M767.5 154.8V161.7M771.5 352.3V382.8M773.5 193.4V194.3M780.5 167.7V168.4M781.5 331.7V369.3M785.5 345.5V366.3M798.5 158.7V161.3M814.5 323.4V383.4M832.5 159.1V171.1M845.5 161.6V179.9M846.5 169.0V173.1M848.5 352.8V372.5M854.5 373.3V382.1M863.5 369.5V385.6M867.5 163.3V173.4M871.5 363.4V383.1M873.5 342.2V365.6M876.5 379.4V382.7M879.5 375.3V380.8M880.5 157.8V163.5M890.5 369.6V380.4M891.5 328.5V380.5M893.5 372.9V382.6M908.5 160.2V167.2M912.5 370.3V377.4M915.5 380.6V382.9M916.5 359.9V378.4M917.5 169.4V176.4M925.5 158.3V159.6M927.5 183.7V222.8M928.5 375.7V383.3M934.5 340.8V377.2M956.5 357.2V364.9M962.5 369.8V379.7M963.5 156.3V201.0M966.5 373.4V384.0M976.5 355.4V380.2M977.5 349.7V384.9M979.5 381.3V384.0M981.5 380.7V380.7M986.5 161.5V177.5M997.5 157.1V159.0M999.5 153.7V174.7M1000.5 379.4V381.7M1004.5 153.4V163.2M1012.5 168.1V169.4M1014.5 156.3V181.7M1027.5 160.1V188.6M1030.5 348.2V377.3M1039.5 172.6V178.3M1040.5 330.7V338.7M1042.5 178.6V202.2M1043.5 160.9V165.8M1044.5 157.5V161.8M1053.5 163.9V174.3M1056.5 371.3V378.4M1057.5 375.3V378.8M1072.5 160.7V162.2M1074.5 155.1V163.6M1076.5 155.0V158.5M1079.5 153.6V165.8M1079.5 365.0V384.5M1102.5 360.1V385.0M1104.5 322.6V380.8M1110.5 159.2V164.4M1114.5 155.6V174.1M1129.5 343.0V380.4M1139.5 175.9V178.6M1157.5 157.1V158.0M1171.5 375.7V384.3M1173.5 375.9V380.7M1174.5 158.1V168.2M1181.5 163.5V197.3M1191.5 154.0V156.7M1197.5 172.4V175.5M1214.5 154.3V157.3M1218.5 314.3V374.3M1232.5 366.5V372.1M1239.5 375.5V382.5M1242.5 155.1V162.0M1252.5 361.4V368.6M1253.5 193.2V197.9M1254.5 356.6V371.5M1260.5 329.8V376.2M1269.5 153.8V165.1M1273.5 170.0V176.5M1278.5 157.1V198.2M1297.5 358.7V385.0M1300.5 157.1V162.9M1300.5 367.0V384.1M1303.5 166.7V181.7M1310.5 167.3V182.0M1313.5 158.8V178.4M1320.5 159.9V160.7" stroke="#0f0e15" stroke-opacity="0.4" stroke-width="1" fill="none"/><path d="M79.5 154.9V377.1M83.5 194.5V378.5M96.5 167.4V383.7M122.5 160.6V380.8M125.5 169.2V385.3M132.5 180.6V359.2M147.5 161.2V377.3M153.5 153.9V377.8M169.5 153.1V374.5M182.5 156.1V357.1M191.5 159.9V374.7M195.5 172.6V380.2M229.5 163.5V383.5M230.5 162.9V385.6M241.5 155.0V379.6M251.5 158.4V385.6M256.5 152.9V378.5M269.5 165.4V371.5M272.5 155.6V385.4M282.5 162.6V382.6M284.5 159.4V364.6M287.5 168.7V377.2M299.5 166.5V383.2M317.5 193.9V379.0M340.5 171.6V384.4M349.5 158.3V382.5M352.5 161.6V374.4M359.5 157.3V385.2M368.5 162.7V340.2M375.5 155.0V383.6M381.5 174.6V382.0M385.5 154.0V382.5M407.5 174.4V378.8M418.5 164.3V382.7M431.5 153.2V381.1M443.5 159.1V377.3M449.5 159.4V382.9M451.5 161.3V382.7M465.5 158.9V366.4M476.5 153.9V374.2M478.5 167.1V380.0M547.5 160.2V371.7M581.5 159.1V376.4M585.5 159.5V380.8M591.5 169.2V370.1M602.5 163.8V384.2M609.5 155.9V381.2M654.5 165.6V380.0M666.5 157.0V384.2M677.5 173.6V383.4M678.5 156.3V379.0M680.5 156.8V365.3M689.5 154.1V377.9M698.5 161.4V382.7M775.5 163.4V383.1M778.5 158.0V382.0M798.5 158.7V380.3M799.5 166.1V362.1M806.5 153.6V383.0M815.5 154.2V382.5M827.5 162.4V382.0M840.5 176.6V374.9M847.5 159.1V378.6M860.5 173.0V370.3M861.5 190.9V375.1M875.5 160.5V378.9M877.5 157.4V383.6M893.5 160.3V382.6M895.5 162.3V384.9M896.5 156.9V381.8M906.5 158.5V379.5M919.5 154.8V371.2M926.5 163.4V384.5M936.5 165.5V377.4M951.5 153.4V361.9M967.5 153.7V383.1M992.5 166.4V376.7M1005.5 158.7V381.7M1007.5 155.2V383.4M1029.5 168.1V383.3M1051.5 174.0V384.3M1062.5 155.1V383.3M1063.5 168.6V377.4M1065.5 160.2V379.3M1066.5 174.6V383.2M1131.5 157.0V385.1M1135.5 176.4V383.2M1144.5 158.0V384.4M1157.5 157.1V367.8M1159.5 161.9V385.2M1160.5 159.3V383.7M1179.5 159.4V383.6M1184.5 154.8V377.4M1193.5 182.2V373.1M1206.5 167.3V379.7M1207.5 166.7V380.8M1215.5 154.4V375.8M1219.5 162.5V383.8M1233.5 173.7V376.3M1237.5 158.7V384.1M1238.5 153.5V363.2M1242.5 155.1V382.8M1250.5 160.8V383.3M1252.5 158.3V368.6M1261.5 155.1V381.6M1291.5 164.0V384.1M1293.5 157.7V385.5M1308.5 161.3V381.1M1323.5 162.9V381.1M1326.5 163.2V384.5" stroke="#0f0e15" stroke-opacity="0.1" stroke-width="1" fill="none"/><path d="M80.5 160.7V172.9M82.5 155.6V173.9M87.5 153.4V189.0M89.5 157.9V160.5M97.5 157.7V172.3M97.5 369.8V374.5M101.5 185.5V220.1M101.5 365.9V381.3M107.5 368.9V379.7M109.5 158.0V192.9M113.5 181.4V185.6M127.5 372.7V383.8M130.5 178.5V182.3M134.5 363.9V365.8M153.5 376.5V377.8M154.5 164.0V196.9M154.5 355.0V367.8M167.5 365.3V377.3M172.5 161.1V175.8M182.5 156.1V163.8M183.5 159.1V183.9M183.5 368.7V383.8M185.5 177.7V198.2M197.5 371.2V373.9M203.5 377.9V381.3M207.5 159.2V199.1M208.5 193.8V208.8M211.5 376.0V379.8M224.5 171.7V177.1M224.5 373.5V381.0M231.5 158.6V168.8M242.5 357.2V385.3M250.5 159.1V172.9M257.5 154.8V160.3M258.5 156.8V172.8M266.5 161.7V164.3M266.5 372.0V376.8M267.5 169.3V171.9M273.5 381.3V385.0M276.5 157.9V163.5M281.5 384.4V384.7M289.5 178.9V181.3M297.5 353.2V369.5M302.5 159.2V193.4M308.5 363.6V367.3M311.5 161.7V210.2M312.5 161.3V164.2M315.5 162.1V166.8M317.5 193.9V203.1M337.5 153.2V156.1M344.5 377.6V380.2M346.5 373.1V378.8M350.5 153.3V155.0M350.5 376.0V378.6M359.5 325.2V385.2M382.5 371.7V382.0M383.5 343.4V378.6M384.5 365.4V380.3M387.5 163.8V169.0M393.5 364.2V377.5M394.5 367.6V378.4M395.5 379.4V384.8M404.5 379.2V384.5M405.5 160.9V164.3M420.5 353.9V385.2M445.5 158.3V160.6M447.5 348.3V358.4M451.5 381.1V382.7M455.5 373.0V383.5M456.5 156.6V167.6M465.5 353.8V366.4M477.5 332.5V370.7M478.5 348.6V380.0M479.5 359.9V360.0M484.5 161.2V175.3M487.5 156.8V157.4M502.5 376.3V380.4M503.5 355.2V385.2M509.5 159.1V215.4M512.5 171.7V177.8M516.5 365.2V379.8M528.5 373.0V380.4M531.5 360.4V364.2M533.5 324.0V384.0M536.5 157.3V177.9M543.5 155.2V158.2M548.5 327.6V384.0M556.5 171.9V176.9M559.5 161.1V162.5M562.5 367.9V381.9M567.5 182.1V216.0M574.5 156.9V169.8M581.5 159.1V168.2M581.5 373.6V376.4M582.5 372.7V375.8M592.5 155.8V160.4M599.5 162.4V177.8M599.5 343.9V374.9M600.5 372.4V378.9M609.5 346.8V381.2M612.5 367.8V376.8M618.5 378.6V384.8M626.5 378.8V379.3M635.5 367.1V383.4M641.5 154.1V157.2M641.5 360.6V383.2M648.5 363.0V373.7M665.5 378.5V381.1M669.5 158.0V161.4M671.5 376.1V385.2M674.5 156.2V166.1M676.5 373.0V381.9M681.5 370.5V380.3M683.5 368.8V382.3M687.5 163.3V168.2M691.5 375.0V377.7M693.5 162.9V172.5M705.5 374.3V379.5M710.5 357.6V377.0M720.5 357.6V376.9M721.5 156.1V192.7M724.5 157.9V167.9M729.5 348.0V380.4M733.5 335.8V380.7M736.5 379.5V381.4M738.5 159.6V164.1M738.5 375.9V379.7M742.5 379.8V384.8M751.5 158.6V162.2M764.5 161.4V219.7M768.5 154.0V157.9M769.5 175.5V187.2M779.5 156.6V175.5M782.5 164.7V169.5M789.5 375.0V377.6M795.5 352.7V382.0M805.5 163.2V169.0M809.5 375.6V382.2M811.5 168.3V178.4M821.5 335.5V360.0M822.5 161.6V168.0M823.5 156.0V166.8M823.5 368.3V370.2M824.5 364.6V375.5M827.5 340.5V382.0M830.5 367.1V385.2M835.5 359.8V383.0M839.5 366.7V377.3M840.5 343.1V374.9M846.5 366.2V372.5M849.5 162.5V167.7M850.5 354.3V368.8M855.5 160.2V167.5M856.5 156.5V167.4M857.5 364.1V382.0M858.5 159.8V163.1M869.5 159.6V163.3M874.5 168.6V174.6M876.5 166.0V180.5M878.5 157.1V163.9M883.5 373.1V380.7M884.5 352.6V364.3M892.5 154.2V161.6M892.5 377.1V384.3M897.5 157.4V170.5M904.5 170.4V171.8M906.5 348.6V379.5M908.5 361.0V378.2M909.5 153.6V170.8M918.5 178.2V188.8M918.5 373.1V384.3M925.5 354.2V384.1M926.5 163.4V196.7M929.5 169.5V172.2M929.5 360.2V373.2M933.5 154.8V173.9M935.5 364.5V368.8M936.5 165.5V182.3M940.5 352.5V384.7M941.5 154.9V180.3M951.5 348.9V361.9M953.5 361.5V365.4M958.5 373.4V376.4M964.5 161.0V166.9M965.5 373.7V379.4M972.5 342.2V381.3M979.5 159.3V160.7M980.5 365.0V381.9M982.5 155.3V158.5M988.5 369.5V381.7M995.5 338.5V340.2M1005.5 379.4V381.7M1006.5 358.4V380.0M1008.5 157.5V188.1M1008.5 371.3V380.9M1009.5 157.0V160.6M1021.5 359.8V379.4M1024.5 376.3V383.7M1027.5 373.2V384.3M1031.5 375.1V380.3M1034.5 159.6V189.1M1038.5 160.5V173.6M1040.5 159.8V164.0M1041.5 168.5V185.8M1043.5 375.8V385.3M1047.5 156.3V188.0M1055.5 155.9V189.8M1061.5 158.5V164.7M1065.5 160.2V160.4M1071.5 331.8V381.0M1075.5 352.8V371.6M1077.5 153.7V160.4M1078.5 369.8V373.3M1084.5 155.0V179.1M1093.5 184.4V184.5M1095.5 181.7V184.5M1095.5 373.8V377.6M1098.5 376.2V379.3M1107.5 349.3V367.2M1112.5 155.3V162.0M1116.5 155.5V162.3M1119.5 383.4V384.1M1133.5 353.1V383.1M1135.5 378.8V383.2M1143.5 325.0V385.0M1147.5 160.4V168.8M1148.5 154.8V198.6M1151.5 377.4V379.2M1153.5 153.8V164.8M1154.5 164.4V186.5M1155.5 159.0V164.9M1155.5 381.3V382.0M1161.5 368.2V381.3M1163.5 356.5V375.3M1167.5 162.0V198.8M1178.5 373.5V376.4M1179.5 379.7V383.6M1184.5 154.8V187.5M1187.5 377.0V384.9M1189.5 155.5V176.0M1192.5 363.4V368.3M1196.5 166.6V168.7M1198.5 159.4V165.2M1199.5 370.0V383.3M1201.5 351.0V381.7M1202.5 379.2V385.1M1203.5 374.5V383.3M1212.5 161.5V168.8M1214.5 357.1V377.8M1216.5 356.1V380.2M1219.5 162.5V164.7M1222.5 316.9V376.9M1225.5 359.8V365.7M1233.5 364.5V376.3M1240.5 164.0V165.1M1241.5 155.0V160.7M1247.5 158.0V161.9M1247.5 355.6V377.4M1249.5 374.7V383.5M1259.5 359.9V365.4M1261.5 381.0V381.6M1263.5 379.4V384.2M1267.5 157.6V164.3M1271.5 381.1V383.5M1279.5 372.4V380.9M1287.5 159.0V173.8M1298.5 375.2V382.1M1302.5 369.7V382.3M1310.5 341.7V375.9M1319.5 159.4V183.6" stroke="#0f0e15" stroke-opacity="0.3" stroke-width="1" fill="none"/><path d="M87.5 364.0V376.4M100.5 361.7V384.1M112.5 375.5V379.8M166.5 164.1V169.5M171.5 371.4V378.9M176.5 162.3V204.4M178.5 162.6V164.9M213.5 365.9V375.9M223.5 160.5V194.1M225.5 154.2V156.2M227.5 165.2V184.3M236.5 372.2V382.8M241.5 155.0V158.0M242.5 158.3V162.7M246.5 158.7V165.0M251.5 158.4V159.4M254.5 358.0V376.3M262.5 323.4V383.4M263.5 357.6V381.3M271.5 156.7V160.4M277.5 376.7V381.8M303.5 363.7V380.9M336.5 163.1V199.6M339.5 164.9V165.3M343.5 372.7V384.3M346.5 165.0V183.9M353.5 155.7V164.6M368.5 327.0V340.2M379.5 162.1V166.0M390.5 380.9V384.3M394.5 155.9V160.9M408.5 365.0V372.7M424.5 160.7V175.3M433.5 164.7V164.8M444.5 170.7V177.2M453.5 156.8V163.3M463.5 154.9V162.1M467.5 364.9V377.6M494.5 162.8V169.1M496.5 358.1V372.4M505.5 166.3V169.0M506.5 374.7V377.4M512.5 361.0V372.5M514.5 370.6V383.3M525.5 369.6V376.5M538.5 361.3V383.5M543.5 325.0V383.8M546.5 154.2V166.3M560.5 155.9V156.3M563.5 166.8V203.4M569.5 167.3V177.5M577.5 157.9V188.7M621.5 347.8V365.0M622.5 155.4V158.2M623.5 165.3V166.9M634.5 160.1V173.7M644.5 154.0V158.7M656.5 374.1V383.1M661.5 163.2V171.4M664.5 168.5V169.4M669.5 380.6V381.7M692.5 155.4V160.7M700.5 361.5V378.2M729.5 170.9V182.2M740.5 181.2V182.2M752.5 362.0V381.7M754.5 381.2V383.3M761.5 165.0V177.3M775.5 374.3V383.1M795.5 154.5V180.1M797.5 374.8V382.5M799.5 166.1V167.4M805.5 377.1V382.4M817.5 383.9V385.3M826.5 374.7V385.0M836.5 353.6V378.7M847.5 159.1V167.5M872.5 369.0V380.4M875.5 369.1V378.9M877.5 366.7V383.6M881.5 160.5V172.1M893.5 160.3V220.3M894.5 379.1V385.4M910.5 156.6V157.7M913.5 155.4V169.8M937.5 327.0V384.7M945.5 373.7V375.7M955.5 154.2V187.9M967.5 345.8V383.1M981.5 156.0V157.3M1001.5 378.8V383.8M1009.5 340.5V352.0M1015.5 363.6V370.4M1016.5 372.6V382.3M1018.5 331.5V374.0M1020.5 158.1V171.4M1026.5 154.5V160.1M1060.5 155.8V178.2M1060.5 368.3V370.2M1064.5 160.1V162.4M1067.5 178.6V228.6M1067.5 348.6V355.5M1069.5 366.7V380.4M1076.5 344.7V381.1M1081.5 372.1V378.0M1082.5 373.6V382.9M1085.5 156.2V159.3M1094.5 381.3V385.0M1106.5 338.4V372.5M1118.5 155.1V158.5M1123.5 154.0V161.5M1124.5 373.6V384.3M1130.5 373.9V382.7M1132.5 160.3V162.0M1177.5 380.1V381.0M1184.5 362.6V377.4M1206.5 371.2V379.7M1211.5 381.3V383.8M1215.5 373.7V375.8M1217.5 366.5V373.2M1231.5 376.9V383.6M1234.5 179.7V229.1M1258.5 341.8V369.7M1263.5 157.4V174.9M1277.5 158.6V160.1M1281.5 337.9V370.5M1287.5 367.1V382.8M1290.5 164.3V172.6M1314.5 328.1V378.3M1315.5 362.4V377.1M1316.5 156.5V161.3" stroke="#0f0e15" stroke-opacity="0.5" stroke-width="1" fill="none"/><path d="M105.5 179.5V385.0M139.5 161.7V370.2M141.5 154.1V376.9M155.5 164.6V384.0M170.5 158.4V363.9M181.5 157.7V382.3M183.5 159.1V383.8M209.5 165.4V376.6M278.5 164.3V360.6M316.5 161.4V375.2M346.5 165.0V378.8M356.5 178.7V380.7M390.5 166.8V384.3M447.5 180.5V358.4M477.5 158.4V370.7M480.5 162.9V378.0M502.5 156.5V380.4M538.5 160.4V383.5M540.5 157.8V353.2M582.5 156.6V375.8M606.5 156.8V375.4M621.5 154.2V365.0M662.5 160.5V381.1M709.5 154.5V381.8M723.5 160.5V383.8M744.5 180.0V381.9M764.5 161.4V380.3M772.5 159.1V382.5M789.5 152.8V377.6M796.5 158.0V381.0M809.5 162.7V382.2M814.5 165.1V383.4M832.5 159.1V382.2M849.5 162.5V374.1M862.5 157.2V383.1M881.5 160.5V377.1M887.5 156.2V381.6M916.5 156.9V378.4M928.5 194.6V383.3M934.5 154.6V377.2M944.5 158.8V384.5M953.5 157.8V365.4M958.5 179.8V376.4M964.5 161.0V377.5M978.5 153.4V381.7M981.5 156.0V380.7M1069.5 155.1V380.4M1096.5 161.7V382.2M1109.5 155.3V381.7M1117.5 155.2V364.9M1128.5 158.3V375.9M1134.5 154.2V378.0M1139.5 175.9V375.4M1171.5 158.3V384.3M1226.5 166.1V378.8M1268.5 162.0V385.2" stroke="#0f0e15" stroke-opacity="0.0" stroke-width="1" fill="none"/><path d="M110.5 364.1V383.2M116.5 337.3V383.2M119.5 372.6V381.6M132.5 180.6V190.8M164.5 193.6V200.3M168.5 375.3V383.3M181.5 374.6V382.3M200.5 178.8V204.8M212.5 161.1V180.7M233.5 382.3V382.9M234.5 163.7V168.7M244.5 362.3V380.1M245.5 357.3V365.8M247.5 153.6V157.9M252.5 356.9V385.4M257.5 369.4V380.5M270.5 172.1V176.7M274.5 365.4V378.7M287.5 317.2V377.2M291.5 158.5V175.2M296.5 157.1V160.3M307.5 170.6V190.5M313.5 155.6V157.2M314.5 323.1V383.1M317.5 376.8V379.0M320.5 378.5V384.4M323.5 372.2V380.0M326.5 366.2V373.8M360.5 376.3V385.3M365.5 156.7V161.4M375.5 155.0V156.8M378.5 189.7V201.8M391.5 368.1V375.8M392.5 175.9V180.7M395.5 157.8V167.5M421.5 381.2V382.1M426.5 365.5V381.3M438.5 361.1V384.7M450.5 378.0V384.9M452.5 153.3V159.7M473.5 159.6V188.1M486.5 155.8V182.2M501.5 167.1V181.4M515.5 188.2V212.9M519.5 382.7V383.9M520.5 347.0V385.2M534.5 155.7V160.3M540.5 350.9V353.2M553.5 159.0V162.4M573.5 179.4V190.6M583.5 171.9V190.7M585.5 159.5V162.5M590.5 340.0V379.7M592.5 312.2V372.2M619.5 159.4V162.2M630.5 160.6V193.8M640.5 153.5V157.2M643.5 167.0V169.1M650.5 374.5V383.9M651.5 334.2V383.2M652.5 159.7V190.1M653.5 359.2V375.0M678.5 156.3V173.2M697.5 375.9V383.6M699.5 353.3V373.4M703.5 170.1V174.3M712.5 160.2V171.5M717.5 379.8V382.4M719.5 153.9V155.1M744.5 180.0V215.6M759.5 370.7V380.7M762.5 167.7V174.7M773.5 358.6V369.6M776.5 154.1V157.7M779.5 361.5V373.9M783.5 354.8V375.9M786.5 153.6V160.2M819.5 372.3V383.7M820.5 157.1V164.9M824.5 159.7V176.8M834.5 341.4V374.1M837.5 155.3V163.5M853.5 372.9V383.0M862.5 157.2V214.9M886.5 379.2V384.8M919.5 362.0V371.2M934.5 154.6V178.5M938.5 381.2V384.4M939.5 167.6V168.6M939.5 379.5V380.5M950.5 155.0V173.1M978.5 153.4V156.6M978.5 379.4V381.7M993.5 169.3V174.4M1004.5 346.4V384.3M1010.5 339.4V355.6M1017.5 371.8V379.8M1022.5 325.8V358.9M1032.5 357.2V384.8M1047.5 359.2V381.2M1048.5 373.1V382.8M1051.5 174.0V186.7M1054.5 169.0V174.4M1073.5 155.1V156.6M1078.5 155.6V156.5M1090.5 355.8V379.3M1094.5 176.7V177.8M1108.5 152.9V178.9M1109.5 380.8V381.7M1115.5 165.2V196.5M1128.5 373.7V375.9M1131.5 348.3V385.1M1134.5 325.3V378.0M1151.5 159.0V160.3M1152.5 382.9V385.0M1163.5 158.2V171.2M1165.5 157.2V162.8M1166.5 166.2V210.2M1168.5 359.2V376.6M1182.5 161.5V163.4M1185.5 379.9V384.6M1190.5 353.7V362.4M1193.5 366.7V373.1M1209.5 157.0V176.3M1233.5 173.7V176.8M1236.5 157.6V158.9M1243.5 357.6V383.4M1245.5 161.3V171.6M1245.5 377.2V381.1M1248.5 371.1V373.5M1256.5 159.6V201.6M1256.5 358.1V371.4M1262.5 177.8V181.7M1284.5 156.1V194.5M1285.5 158.5V162.5M1286.5 170.1V181.2M1289.5 159.0V160.0M1309.5 343.2V382.3M1320.5 365.6V379.3M1327.5 162.2V163.7" stroke="#0f0e15" stroke-opacity="0.2" stroke-width="1" fill="none"/>
<path d="M1218.6 152V252M1218.6 256V387" stroke="#2c7a9e" stroke-width="1.5"/>
</svg>
<div class="t" style="left:46.70px;top:169.41px;font-size:11.5px;color:#bec1ca;letter-spacing:1.057px;font-weight:bold;">900</div>
<div class="t" style="left:46.70px;top:192.91px;font-size:11.5px;color:#bec1ca;letter-spacing:1.057px;font-weight:bold;">800</div>
<div class="t" style="left:46.70px;top:216.41px;font-size:11.5px;color:#bec1ca;letter-spacing:1.057px;font-weight:bold;">700</div>
<div class="t" style="left:46.70px;top:239.71px;font-size:11.5px;color:#bec1ca;letter-spacing:1.057px;font-weight:bold;">600</div>
<div class="t" style="left:46.70px;top:263.11px;font-size:11.5px;color:#bec1ca;letter-spacing:1.057px;font-weight:bold;">500</div>
<div class="t" style="left:46.70px;top:286.51px;font-size:11.5px;color:#bec1ca;letter-spacing:1.057px;font-weight:bold;">400</div>
<div class="t" style="left:46.70px;top:309.91px;font-size:11.5px;color:#bec1ca;letter-spacing:1.057px;font-weight:bold;">300</div>
<div class="t" style="left:46.70px;top:333.31px;font-size:11.5px;color:#bec1ca;letter-spacing:1.057px;font-weight:bold;">200</div>
<div class="t" style="left:46.70px;top:356.71px;font-size:11.5px;color:#bec1ca;letter-spacing:1.057px;font-weight:bold;">100</div>
<div class="t" style="left:97.35px;top:395.93px;font-size:11.3px;color:#bec1ca;letter-spacing:0.000px;font-weight:bold;">2022-01-21 16:42:15 GMT+8</div>
<div class="t" style="left:363.85px;top:395.93px;font-size:11.3px;color:#bec1ca;letter-spacing:0.000px;font-weight:bold;">2022-01-21 16:42:20 GMT+8</div>
<div class="t" style="left:630.35px;top:395.93px;font-size:11.3px;color:#bec1ca;letter-spacing:0.000px;font-weight:bold;">2022-01-21 16:42:25 GMT+8</div>
<div class="t" style="left:896.85px;top:395.93px;font-size:11.3px;color:#bec1ca;letter-spacing:0.000px;font-weight:bold;">2022-01-21 16:42:30 GMT+8</div>
<div class="t" style="left:1163.35px;top:395.93px;font-size:11.3px;color:#bec1ca;letter-spacing:0.000px;font-weight:bold;">2022-01-21 16:42:35 GMT+8</div>
<div class="abs" style="left:591px;top:286px;width:598px;height:54px;background:#1b1b23;border-radius:3px"></div>
<div class="t" style="left:602.40px;top:297.84px;font-size:12px;color:#b4b7c1;letter-spacing:0.500px;">_time</div>
<div class="t" style="left:602.40px;top:314.84px;font-size:12px;color:#31c0f6;letter-spacing:0.508px;font-weight:bold;">2022-01-21 16:42:34 GMT+8</div>
<div class="t" style="left:784.64px;top:297.84px;font-size:12px;color:#b4b7c1;letter-spacing:0.500px;">_value</div>
<div class="t" style="left:790.47px;top:314.84px;font-size:12px;color:#31c0f6;letter-spacing:0.500px;font-weight:bold;">567.5</div>
<div class="t" style="left:835.00px;top:297.84px;font-size:12px;color:#b4b7c1;letter-spacing:0.500px;">_field</div>
<div class="t" style="left:835.00px;top:314.84px;font-size:12px;color:#31c0f6;letter-spacing:0.500px;font-weight:bold;">phy</div>
<div class="t" style="left:879.70px;top:297.84px;font-size:12px;color:#b4b7c1;letter-spacing:0.588px;">_measurement</div>
<div class="t" style="left:879.70px;top:314.84px;font-size:12px;color:#31c0f6;letter-spacing:0.500px;font-weight:bold;">vib</div>
<div class="t" style="left:978.00px;top:297.84px;font-size:12px;color:#b4b7c1;letter-spacing:0.500px;">id</div>
<div class="t" style="left:978.00px;top:314.84px;font-size:12px;color:#31c0f6;letter-spacing:0.745px;font-weight:bold;">e48bd4a1-e2d1-43eb-bfcf-992...</div>

<!-- resize handle & tab bar -->
<div class="abs" style="left:655px;top:428px;width:60px;height:4px;background:#3a3a47;border-radius:2px"></div>
<div class="abs" style="left:25px;top:434px;width:1320px;height:38px;background:#0f0e15;border-radius:4px"></div>
<div class="bx" style="left:29px;top:438px;width:116px;height:30px;background:#292933"></div>
<div class="bx" style="left:149px;top:438px;width:30px;height:30px"></div>
<svg class="abs" style="left:158px;top:447px" width="12" height="12" viewBox="0 0 12 12"><path d="M6.3 0.5V11.5M0.5 6H12" stroke="#e6e8ee" stroke-width="1.8"/></svg>

<svg class="abs" style="left:655px;top:444px" width="18" height="18" viewBox="0 0 18 18"><circle cx="9" cy="9" r="9" fill="#676978"/><text x="9" y="14.3" text-anchor="middle" font-family="Liberation Sans" font-weight="bold" font-size="15" fill="#0f0e15">?</text></svg>
<div class="abs" style="left:773px;top:445px;width:28px;height:16px;border-radius:8px;background:#393946"></div>
<div class="abs" style="left:777px;top:449px;width:8px;height:8px;border-radius:4px;background:#c6cad3"></div>

<div class="bx" style="left:813px;top:438px;width:65px;height:30px"></div>
<svg class="abs" style="left:815px;top:440px" width="30" height="26" viewBox="0 0 30 26"><rect x="12.4" y="5.7" width="3.1" height="8.6" fill="#e6e8ee"/><path d="M9.6 13.6H18.3L13.95 18.4Z" fill="#e6e8ee"/><path d="M7.9 16.2V19.2A1.3 1.3 0 0 0 9.2 20.5H18.7A1.3 1.3 0 0 0 20 19.2V16.2" stroke="#e6e8ee" stroke-width="1.6" fill="none"/></svg>
<div class="bx" style="left:882px;top:438px;width:50px;height:30px"></div>
<svg class="abs" style="left:894px;top:448px" width="9" height="10" viewBox="0 0 9 10"><rect x="0.2" y="0" width="2.7" height="10" fill="#e6e8ee"/><rect x="5.6" y="0" width="2.7" height="10" fill="#e6e8ee"/></svg>
<svg class="abs" style="left:911px;top:450px" width="11" height="6" viewBox="0 0 11 6"><path d="M0 0H11L5.5 6Z" fill="#dfe1e8"/></svg>
<div class="bx" style="left:936px;top:438px;width:30px;height:30px"></div>
<svg class="abs" style="left:938px;top:440px" width="28" height="26" viewBox="0 0 28 26"><path d="M6.7 13.5A6.3 6.3 0 0 1 18.46 10.35M19.3 13.5A6.3 6.3 0 0 1 7.54 16.65" stroke="#e6e8ee" stroke-width="2" fill="none"/><path d="M21.2 5.8V11.6H15.5Z M4.8 21.2V15.4H10.5Z" fill="#e6e8ee"/></svg>
<div class="bx" style="left:970px;top:438px;width:158px;height:30px"></div>
<svg class="abs" style="left:980px;top:446.5px" width="13" height="13" viewBox="0 0 13 13"><circle cx="6.5" cy="6.2" r="6" fill="#dfe1e8"/><path d="M6.9 2.7V6.8H10.3" stroke="#17171e" stroke-width="1.6" fill="none"/></svg>
<svg class="abs" style="left:1107px;top:450px" width="11" height="6" viewBox="0 0 11 6"><path d="M0 0H11L5.5 6Z" fill="#dfe1e8"/></svg>
<div class="bx" style="left:1132px;top:438px;width:105px;height:30px"></div>
<div class="bx" style="left:1241px;top:438px;width:100px;height:30px;background:linear-gradient(45deg,#066fc5,#00a3ff)"></div>
<div class="t" style="left:39.30px;top:447.74px;font-size:12px;color:#e6e8ee;letter-spacing:0.202px;font-weight:bold;">Query 1</div>
<div class="t" style="left:89.10px;top:447.74px;font-size:12px;color:#8b8e9b;letter-spacing:0.064px;font-weight:bold;">(1.16s)</div>
<div class="t" style="left:677.30px;top:447.64px;font-size:12px;color:#f2f3f6;letter-spacing:0.610px;font-weight:bold;">View Raw Data</div>
<div class="t" style="left:842.80px;top:446.94px;font-size:12px;color:#e6e8ee;letter-spacing:0.213px;font-weight:bold;">CSV</div>
<div class="t" style="left:999.90px;top:446.94px;font-size:12px;color:#e6e8ee;letter-spacing:0.813px;font-weight:bold;">Past 5m</div>
<div class="t" style="left:1142.60px;top:446.94px;font-size:12px;color:#e6e8ee;letter-spacing:0.429px;font-weight:bold;">Query Builder</div>
<div class="t" style="left:1268.80px;top:446.94px;font-size:12px;color:#fff;letter-spacing:0.907px;font-weight:bold;">Submit</div>

<!-- editor -->
<div class="abs" style="left:25px;top:480px;width:842px;height:163px;background:#202029"></div>
<div class="abs" style="left:25px;top:480px;width:47px;height:163px;background:#212129"></div>
<div class="abs" style="left:72px;top:552px;width:795px;height:18px;background:#353541"></div>
<div class="abs" style="left:72px;top:498px;width:1px;height:72px;background:#3b3d4a"></div>
<div class="ln" style="top:480px">1</div>
<div class="ln" style="top:498px">2</div>
<div class="ln" style="top:516px">3</div>
<div class="ln" style="top:534px">4</div>
<div class="ln" style="top:552px">5</div>
<div class="code" style="top:480px"><span class="kw">from</span>(bucket: <span class="str">"data"</span>)</div>
<div class="code" style="top:498px">  <span class="pipe">|&gt;</span> <span class="kw">range</span>(start: v.timeRangeStart, stop: v.timeRangeStop)</div>
<div class="code" style="top:516px">  <span class="pipe">|&gt;</span> <span class="kw">filter</span>(<span class="kw">fn</span>: (r) <span class="op">=&gt;</span> r[<span class="str">"_measurement"</span>] <span class="op">==</span> <span class="str">"vib"</span>)</div>
<div class="code" style="top:534px">  <span class="pipe">|&gt;</span> <span class="kw">filter</span>(<span class="kw">fn</span>: (r) <span class="op">=&gt;</span> r[<span class="str">"_field"</span>] <span class="op">==</span> <span class="str">"phy"</span>)</div>
<div class="code" style="top:552px">  <span class="pipe">|&gt;</span> <span class="kw">filter</span>(<span class="kw">fn</span>: (r) <span class="op">=&gt;</span> r[<span class="str">"id"</span>] <span class="op">==</span> <span class="str">"e48bd4a1-e2d1-43eb-bfcf-99257142e5e4"</span>)</div>
<div class="abs" style="left:869px;top:480px;width:122px;height:163px;background:#202029"></div>
<div class="abs" style="left:867px;top:480px;width:2px;height:163px;background:#25252e"></div>
<!-- minimap -->
<svg class="abs" style="left:869px;top:480px" width="122" height="30">
  <rect x="8" y="0" width="4" height="2" fill="#7676c8"/><rect x="12" y="0" width="8" height="2" fill="#9a9ca6"/><rect x="21" y="0" width="7" height="2" fill="#5aa35a"/>
  <rect x="10" y="3" width="2" height="2" fill="#7676c8"/><rect x="13" y="3" width="5" height="2" fill="#7676c8"/><rect x="18" y="3" width="7" height="2" fill="#9a9ca6"/><rect x="26" y="3" width="17" height="2" fill="#9a9ca6"/><rect x="44" y="3" width="5" height="2" fill="#9a9ca6"/><rect x="50" y="3" width="16" height="2" fill="#9a9ca6"/>
  <rect x="10" y="6" width="2" height="2" fill="#7676c8"/><rect x="13" y="6" width="10" height="2" fill="#7676c8"/><rect x="24" y="6" width="3" height="2" fill="#9a9ca6"/><rect x="28" y="6" width="2" height="2" fill="#c2407a"/><rect x="31" y="6" width="17" height="2" fill="#5aa35a"/><rect x="49" y="6" width="2" height="2" fill="#c2407a"/><rect x="52" y="6" width="6" height="2" fill="#5aa35a"/>
  <rect x="10" y="9" width="2" height="2" fill="#7676c8"/><rect x="13" y="9" width="10" height="2" fill="#7676c8"/><rect x="24" y="9" width="3" height="2" fill="#9a9ca6"/><rect x="28" y="9" width="2" height="2" fill="#c2407a"/><rect x="31" y="9" width="11" height="2" fill="#5aa35a"/><rect x="43" y="9" width="2" height="2" fill="#c2407a"/><rect x="46" y="9" width="6" height="2" fill="#5aa35a"/>
  <rect x="8" y="11.5" width="102" height="3" fill="#213a55"/>
  <rect x="10" y="12" width="2" height="2" fill="#5b6bb0"/><rect x="13" y="12" width="10" height="2" fill="#5b6bb0"/><rect x="24" y="12" width="3" height="2" fill="#6d7a90"/><rect x="28" y="12" width="2" height="2" fill="#7e4a80"/><rect x="31" y="12" width="7" height="2" fill="#3f8080"/><rect x="39" y="12" width="2" height="2" fill="#7e4a80"/><rect x="42" y="12" width="40" height="2" fill="#3f8a80"/><rect x="82" y="12" width="2" height="2" fill="#4a78b0"/>
</svg>
<div class="abs" style="left:979px;top:535px;width:12px;height:2px;background:#e0e0e0"></div>

<!-- functions panel -->
<div class="abs" style="left:999px;top:480px;width:300px;height:170px;background:#292933;border-radius:4px"></div>
<div class="abs" style="left:1007px;top:488px;width:284px;height:30px;background:#1e1e27;border:2px solid #393947;border-radius:3px"></div>
<svg class="abs" style="left:1016.5px;top:496.5px" width="15" height="15" viewBox="0 0 15 15"><circle cx="6" cy="6" r="4.7" stroke="#d5d7de" stroke-width="1.9" fill="none"/><path d="M9.4 9.4L13.6 13.6" stroke="#d5d7de" stroke-width="2.2" stroke-linecap="round"/></svg>
<div class="abs" style="left:999px;top:561px;width:300px;height:2px;background:#393946"></div>
<div class="abs" style="left:1290px;top:529px;width:6px;height:31px;border-radius:3px;background:linear-gradient(180deg,#9b2aff,#00a3ff)"></div>
<div class="abs" style="left:1290px;top:563px;width:6px;height:80px;background:#23232c"></div>
<div class="fn" style="top:572.3px;width:127.6px"></div>
<div class="fnt" style="top:576.7px">aggregate.rate</div>
<div class="fn" style="top:604px;width:207.8px"></div>
<div class="fnt" style="top:608.4px">chandeMomentumOscillator</div>
<div class="fn" style="top:636px;width:71.8px"></div>
<div class="fnt" style="top:640.1px">columns</div>
<div class="t" style="left:1039.80px;top:497.00px;font-size:13px;color:#777a8a;letter-spacing:0.506px;font-style:italic;">Filter Functions...</div>
<div class="t" style="left:1015.50px;top:536.22px;font-size:12.5px;color:#dcdee5;letter-spacing:0.383px;font-weight:bold;">Transformations</div>

<div class="abs" style="left:1307px;top:480px;width:38px;height:125px;background:#292933;border-radius:4px"></div>
<div class="abs" style="left:1307px;top:613px;width:38px;height:40px;background:#25252e;border-radius:4px"></div>
<div class="t" style="left:1318px;top:511.6px;width:15px;height:64px"><div style="position:absolute;left:0;top:0;width:64px;height:13px;transform-origin:0 0;transform:translate(13px,0) rotate(90deg);font-size:12.5px;font-weight:bold;color:#dcdee5;line-height:1;letter-spacing:0.3px">Functions</div></div>

</body></html>
